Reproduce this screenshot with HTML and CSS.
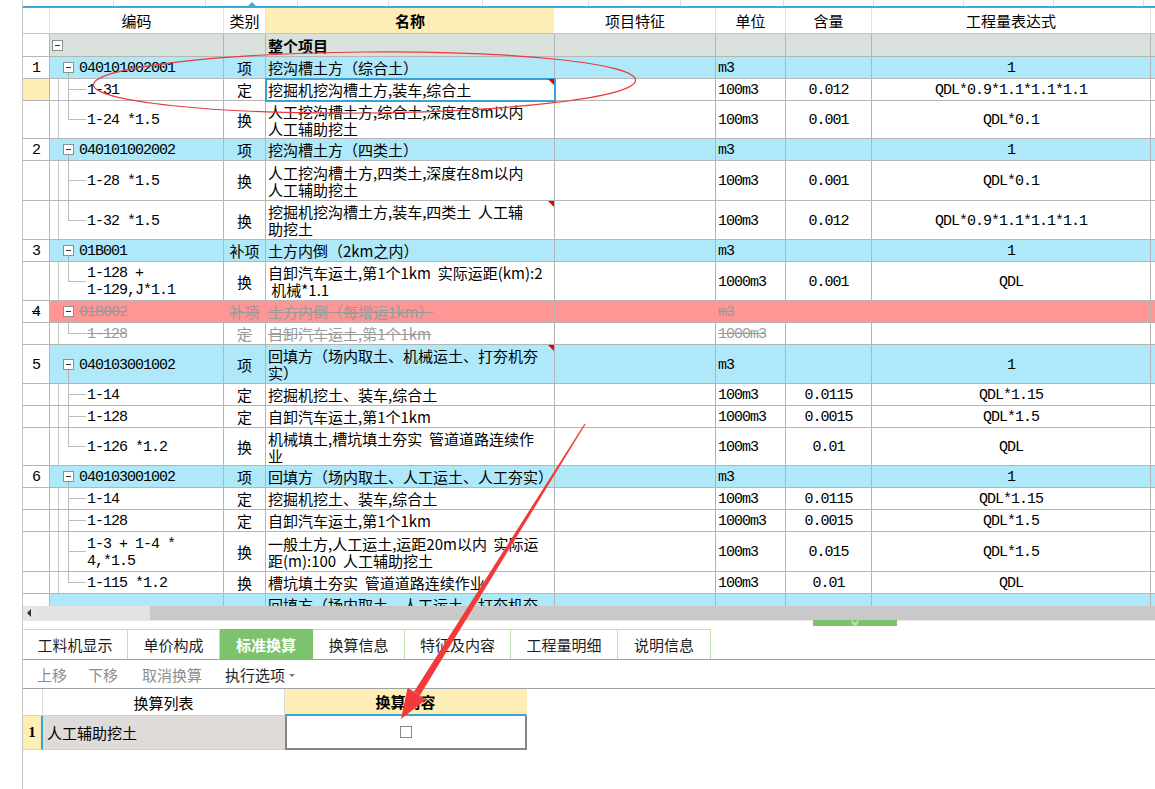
FILE: index.html
```html
<!DOCTYPE html>
<html>
<head>
<meta charset="utf-8">
<title>标准换算</title>
<link rel="stylesheet" href="styles.css">
</head>
<body>
<div class="app">
  <div class="gutter"></div>
  <div class="main">
    <div class="strip"><span></span><span></span><span><i class="tri"></i></span><span></span><span></span><span></span><span></span><span></span><span></span><span></span><span></span><span></span></div>
    <div class="blueline"></div>
    <div class="grid">
      <div class="row hdr"><div class="n"></div><div class="c">编码</div><div class="t">类别</div><div class="nm hl">名称</div><div class="f">项目特征</div><div class="u">单位</div><div class="q">含量</div><div class="e">工程量表达式</div><div class="x"></div></div>
      <div class="row r23 gray"><div class="n"></div><div class="c top"><i class="box"></i></div><div class="t"></div><div class="nm b">整个项目</div><div class="f"></div><div class="u"></div><div class="q"></div><div class="e"></div><div class="x"></div></div>
      <div class="row blue"><div class="n">1</div><div class="c pc kids"><i class="box"></i>040101002001</div><div class="t">项</div><div class="nm">挖沟槽土方（综合土）</div><div class="f"></div><div class="u">m3</div><div class="q"></div><div class="e">1</div><div class="x"></div></div>
      <div class="row"><div class="n yel"></div><div class="c cc"><i class="tree"></i>1-31</div><div class="t">定</div><div class="nm cm sel">挖掘机挖沟槽土方,装车,综合土</div><div class="f"></div><div class="u">100m3</div><div class="q">0.012</div><div class="e">QDL*0.9*1.1*1.1*1.1</div><div class="x"></div></div>
      <div class="row r38 last"><div class="n"></div><div class="c cc"><i class="tree"></i>1-24 *1.5</div><div class="t">换</div><div class="nm">人工挖沟槽土方,综合土,深度在8m以内<br>人工辅助挖土</div><div class="f"></div><div class="u">100m3</div><div class="q">0.001</div><div class="e">QDL*0.1</div><div class="x"></div></div>
      <div class="row blue"><div class="n">2</div><div class="c pc kids"><i class="box"></i>040101002002</div><div class="t">项</div><div class="nm">挖沟槽土方（四类土）</div><div class="f"></div><div class="u">m3</div><div class="q"></div><div class="e">1</div><div class="x"></div></div>
      <div class="row r40"><div class="n"></div><div class="c cc"><i class="tree"></i>1-28 *1.5</div><div class="t">换</div><div class="nm">人工挖沟槽土方,四类土,深度在8m以内<br>人工辅助挖土</div><div class="f"></div><div class="u">100m3</div><div class="q">0.001</div><div class="e">QDL*0.1</div><div class="x"></div></div>
      <div class="row r39 last"><div class="n"></div><div class="c cc"><i class="tree"></i>1-32 *1.5</div><div class="t">换</div><div class="nm cm">挖掘机挖沟槽土方,装车,四类土  人工辅<br>助挖土</div><div class="f"></div><div class="u">100m3</div><div class="q">0.012</div><div class="e">QDL*0.9*1.1*1.1*1.1</div><div class="x"></div></div>
      <div class="row blue"><div class="n">3</div><div class="c pc kids"><i class="box"></i>01B001</div><div class="t">补项</div><div class="nm">土方内倒（2km之内）</div><div class="f"></div><div class="u">m3</div><div class="q"></div><div class="e">1</div><div class="x"></div></div>
      <div class="row r39 last"><div class="n"></div><div class="c cc"><i class="tree"></i>1-128 +<br>1-129,J*1.1</div><div class="t">换</div><div class="nm">自卸汽车运土,第1个1km  实际运距(km):2<br> 机械*1.1</div><div class="f"></div><div class="u">1000m3</div><div class="q">0.001</div><div class="e">QDL</div><div class="x"></div></div>
      <div class="row red strike"><div class="n">4</div><div class="c pc kids"><i class="box"></i>01B002</div><div class="t">补项</div><div class="nm">土方内倒（每增运1km）</div><div class="f"></div><div class="u">m3</div><div class="q"></div><div class="e"></div><div class="x"></div></div>
      <div class="row strike last"><div class="n"></div><div class="c cc"><i class="tree"></i>1-128</div><div class="t">定</div><div class="nm">自卸汽车运土,第1个1km</div><div class="f"></div><div class="u">1000m3</div><div class="q"></div><div class="e"></div><div class="x"></div></div>
      <div class="row r39 blue"><div class="n">5</div><div class="c pc kids"><i class="box"></i>040103001002</div><div class="t">项</div><div class="nm cm">回填方（场内取土、机械运土、打夯机夯<br>实）</div><div class="f"></div><div class="u">m3</div><div class="q"></div><div class="e">1</div><div class="x"></div></div>
      <div class="row"><div class="n"></div><div class="c cc"><i class="tree"></i>1-14</div><div class="t">定</div><div class="nm">挖掘机挖土、装车,综合土</div><div class="f"></div><div class="u">100m3</div><div class="q">0.0115</div><div class="e">QDL*1.15</div><div class="x"></div></div>
      <div class="row"><div class="n"></div><div class="c cc"><i class="tree"></i>1-128</div><div class="t">定</div><div class="nm">自卸汽车运土,第1个1km</div><div class="f"></div><div class="u">1000m3</div><div class="q">0.0015</div><div class="e">QDL*1.5</div><div class="x"></div></div>
      <div class="row r38 last"><div class="n"></div><div class="c cc"><i class="tree"></i>1-126 *1.2</div><div class="t">换</div><div class="nm">机械填土,槽坑填土夯实  管道道路连续作<br>业</div><div class="f"></div><div class="u">100m3</div><div class="q">0.01</div><div class="e">QDL</div><div class="x"></div></div>
      <div class="row blue"><div class="n">6</div><div class="c pc kids"><i class="box"></i>040103001002</div><div class="t">项</div><div class="nm">回填方（场内取土、人工运土、人工夯实）</div><div class="f"></div><div class="u">m3</div><div class="q"></div><div class="e">1</div><div class="x"></div></div>
      <div class="row"><div class="n"></div><div class="c cc"><i class="tree"></i>1-14</div><div class="t">定</div><div class="nm">挖掘机挖土、装车,综合土</div><div class="f"></div><div class="u">100m3</div><div class="q">0.0115</div><div class="e">QDL*1.15</div><div class="x"></div></div>
      <div class="row"><div class="n"></div><div class="c cc"><i class="tree"></i>1-128</div><div class="t">定</div><div class="nm">自卸汽车运土,第1个1km</div><div class="f"></div><div class="u">1000m3</div><div class="q">0.0015</div><div class="e">QDL*1.5</div><div class="x"></div></div>
      <div class="row r40"><div class="n"></div><div class="c cc"><i class="tree"></i>1-3 + 1-4 *<br>4,*1.5</div><div class="t">换</div><div class="nm">一般土方,人工运土,运距20m以内  实际运<br>距(m):100  人工辅助挖土</div><div class="f"></div><div class="u">100m3</div><div class="q">0.015</div><div class="e">QDL*1.5</div><div class="x"></div></div>
      <div class="row last"><div class="n"></div><div class="c cc"><i class="tree"></i>1-115 *1.2</div><div class="t">换</div><div class="nm">槽坑填土夯实  管道道路连续作业</div><div class="f"></div><div class="u">100m3</div><div class="q">0.01</div><div class="e">QDL</div><div class="x"></div></div>
      <div class="row r39 blue"><div class="n"></div><div class="c pc kids"><i class="box"></i></div><div class="t"></div><div class="nm">回填方（场内取土、人工运土、打夯机夯<br>实）</div><div class="f"></div><div class="u"></div><div class="q"></div><div class="e"></div><div class="x"></div></div>
    </div>
    <div class="hscroll"><div class="sb-btn"><i></i></div><div class="sb-track"></div><div class="sb-thumb"></div></div>
    <div class="splitter"><div class="handle"><svg width="10" height="6" viewBox="0 0 10 6"><polyline points="1.5,0.5 5,3.5 8.5,0.5" fill="none" stroke="#e6f4e0" stroke-width="1"/><polyline points="1.5,2.5 5,5.5 8.5,2.5" fill="none" stroke="#e6f4e0" stroke-width="1"/></svg></div></div>
    <div class="tabs">
      <div class="tab">工料机显示</div>
      <div class="tab">单价构成</div>
      <div class="tab on">标准换算</div>
      <div class="tab">换算信息</div>
      <div class="tab">特征及内容</div>
      <div class="tab">工程量明细</div>
      <div class="tab">说明信息</div>
    </div>
    <div class="toolbar">
      <span class="tb">上移</span>
      <span class="tb">下移</span>
      <span class="tb">取消换算</span>
      <span class="tb act">执行选项</span><i class="caret"></i>
    </div>
    <div class="panel">
      <div class="srow shdr"><div class="sn"></div><div class="sl">换算列表</div><div class="sc hl">换算内容</div></div>
      <div class="srow sdata"><div class="sn">1</div><div class="sl">人工辅助挖土</div><div class="sc"><i class="chk"></i></div></div>
    </div>
  </div>
</div>
<svg class="annot" width="1155" height="789" viewBox="0 0 1155 789">
  <ellipse cx="364.5" cy="82.5" rx="271" ry="30.5" fill="none" stroke="#ea3a3d" stroke-width="1.2" transform="rotate(-0.5 364.5 82.5)"/>
  <polygon points="585.5,424.3 419.8,695.4 414.0,691.8 584.5,423.7" fill="#f23a3a"/>
  <polygon points="401,719 426.2,699.4 407.6,687.8" fill="#f23a3a"/>
</svg>
</body>
</html>
```

FILE: styles.css
```css
* { box-sizing: border-box; margin: 0; padding: 0; }
html, body { width: 1155px; height: 789px; overflow: hidden; }
body {
  position: relative;
  background: #fff;
  font-family: "Noto Sans CJK SC", "Noto Sans", sans-serif;
  font-size: 15px;
  line-height: 17px;
  color: #000;
}
i { font-style: normal; }

.app { display: flex; height: 789px; }
.gutter { flex: none; width: 22px; }
.main {
  flex: none;
  width: 1133px;
  border-left: 1px solid #c6c6c6;
  display: flex;
  flex-direction: column;
  overflow: hidden;
}

/* top strip remnant */
.strip { flex: none; height: 6px; display: flex; }
.strip span { flex: none; height: 6px; border-right: 1px solid #e0e0e0; display: flex; align-items: flex-end; }
.strip span:nth-child(1) { width: 91px; }
.strip span:nth-child(2) { width: 92px; }
.strip span:nth-child(3) { width: 92px; }
.strip span:nth-child(4) { width: 91px; }
.strip span:nth-child(5) { width: 94px; }
.strip span:nth-child(6) { width: 106px; }
.strip span:nth-child(7) { width: 92px; }
.strip span:nth-child(8) { width: 103px; }
.strip span:nth-child(n+9) { width: 90px; }
.tri {
  display: block; width: 0; height: 0; margin-left: 42px;
  border-left: 4px solid transparent; border-right: 4px solid transparent;
  border-bottom: 4px solid #3fa9dc;
}
.blueline { flex: none; height: 2px; background: #3fa9dc; }

/* main grid */
.grid { flex: none; height: 598px; overflow: hidden; }
.row {
  display: grid;
  grid-template-columns: 27px 174px 42px 289px 161px 70px 86px 279px 80px;
  height: 22px;
}
.row > div {
  display: flex;
  align-items: center;
  border-right: 1px solid #b5b5b5;
  border-bottom: 1px solid #b5b5b5;
  white-space: pre;
  overflow: hidden;
  background-color: #fff;
}
.r23 { height: 23px; }
.r38 { height: 38px; }
.r39 { height: 39px; }
.r40 { height: 40px; }

.hdr { height: 26px; }
.hdr > div { border-right-color: #e2e2e2; border-bottom-color: #c4c4c4; justify-content: center; }
.hdr > .hl { background-color: #feedb4; font-weight: bold; border-right-color: #fff; }

.row:not(.hdr) > .n,
.row:not(.hdr) > .c,
.row:not(.hdr) > .u,
.row:not(.hdr) > .q,
.row:not(.hdr) > .e {
  font-family: "Liberation Mono", monospace;
  font-size: 15px;
  letter-spacing: -1px;
  padding-top: 2px;
}
.n { justify-content: center; }
.t, .q, .e { justify-content: center; }
.row:not(.hdr) > .nm { padding-left: 2px; }
.row:not(.hdr) > .u { padding-left: 2px; }
.b { font-weight: bold; }

.gray > div:not(.n) { background-color: #d9e1dd; }
.blue > div:not(.n) { background-color: #aee8f9; }
.red > div:not(.n) { background-color: #ff9595; }
.strike > div { color: #9a9a9a; text-decoration: line-through; }
.strike > .n { color: #000; }
.row > .yel { background-color: #feedb4; }

/* tree */
.box {
  flex: none;
  width: 11px; height: 11px;
  border: 1px solid #8e8e8e;
  background: #fff linear-gradient(#333, #333) center / 5px 1px no-repeat;
  margin-right: 5px;
}
.row:not(.hdr) > .top { padding-left: 2px; padding-top: 0; }
.row:not(.hdr) > .pc { padding-left: 13px; }
.pc.kids {
  background-image: linear-gradient(#b0b0b0, #b0b0b0);
  background-repeat: no-repeat;
  background-position: 18px 100%;
  background-size: 1px 50%;
}
.row:not(.hdr) > .cc { padding-left: 8px; }
.tree {
  flex: none;
  align-self: stretch;
  width: 29px;
  margin-top: -2px;
  border-left: 1px solid #c8c8c8;
  background-image: linear-gradient(#bcbcbc, #bcbcbc), linear-gradient(#bcbcbc, #bcbcbc);
  background-repeat: no-repeat;
  background-position: 9px 0, 9px 50%;
  background-size: 1px 100%, 18px 1px;
}
.last .tree { background-size: 1px 50%, 18px 1px; }
.pc .box { margin-top: -2px; }

.cm { position: relative; }
.cm::after {
  content: "";
  position: absolute; top: 0; right: 0;
  border-top: 6px solid #e60000;
  border-left: 6px solid transparent;
}
.sel { outline: 2px solid #3aa3d5; outline-offset: -1px; }

/* horizontal scrollbar */
.hscroll { flex: none; height: 14px; display: flex; }
.sb-btn { flex: none; width: 12px; background: #e6e6e6; display: flex; align-items: center; justify-content: center; }
.sb-btn i { width: 0; height: 0; border-right: 4px solid #333; border-top: 4px solid transparent; border-bottom: 4px solid transparent; }
.sb-track { flex: none; width: 115px; background: #e3e3e3; }
.sb-thumb { flex: 1; background: #c9c9c9; }

.splitter {
  flex: none; height: 9px;
  background: linear-gradient(#e6e6e6, #e6e6e6) 0 0 / 100% 1px no-repeat;
}
.handle {
  margin-left: 790px; width: 84px; height: 6px;
  background: #7dc36b;
  display: flex; justify-content: center;
}
.handle svg { display: block; }

/* tabs */
.tabs { flex: none; display: flex; height: 31px; border-bottom: 1px solid #78c166; }
.tab {
  flex: none; height: 30px;
  border-top: 1px solid #bfe3ae; border-right: 1px solid #bfe3ae;
  display: flex; align-items: center; justify-content: center;
  color: #1e1e1e;
}
.tab:nth-child(1) { width: 105px; }
.tab:nth-child(2) { width: 92px; }
.tab:nth-child(3) { width: 93px; }
.tab:nth-child(4) { width: 92px; }
.tab:nth-child(5) { width: 106px; }
.tab:nth-child(6) { width: 107px; }
.tab:nth-child(7) { width: 93px; }
.tab.on { background: #7dc36b; border-color: #7dc36b; color: #fff; font-weight: bold; }

/* toolbar */
.toolbar { flex: none; height: 28px; display: flex; align-items: center; padding-left: 14px; }
.tb { color: #8d8d8d; }
.tb:nth-child(1) { margin-right: 21px; }
.tb:nth-child(2) { margin-right: 24px; }
.tb:nth-child(3) { margin-right: 23px; }
.tb.act { color: #1e1e1e; }
.caret {
  width: 0; height: 0; margin-left: 4px; margin-top: 2px;
  border-top: 3px solid #777; border-left: 3px solid transparent; border-right: 3px solid transparent;
}

/* bottom panel */
.panel { flex: 1; border-top: 1px solid #9ba1a8; }
.srow { display: grid; grid-template-columns: 20px 242px 242px; }
.shdr { height: 27px; }
.shdr > div {
  display: flex; align-items: center; justify-content: center;
  border-right: 1px solid #dcdcdc; border-bottom: 1px solid #d0d0d0;
}
.shdr > .hl { background: #feedb4; font-weight: bold; border-bottom: 2px solid #3aa3d5; border-right-color: #feedb4; }
.sdata { height: 34px; }
.sdata > div { display: flex; align-items: center; }
.sdata > .sn {
  justify-content: center;
  background: #feedb4;
  border-right: 2px solid #3aa3d5;
  border-bottom: 1px solid #d8d8d8;
  font-family: "Liberation Serif", serif;
  font-weight: bold;
}
.sdata > .sl { background: #dfdbd9; padding-left: 4px; border-bottom: 1px solid #d0d0d0; }
.sdata > .sc { justify-content: center; border: 2px solid #858585; border-top: none; }
.chk { width: 12px; height: 12px; border: 1px solid #8a8a8a; background: #fff; }

/* annotations drawn over the screenshot */
.annot { position: absolute; left: 0; top: 0; pointer-events: none; }
```
